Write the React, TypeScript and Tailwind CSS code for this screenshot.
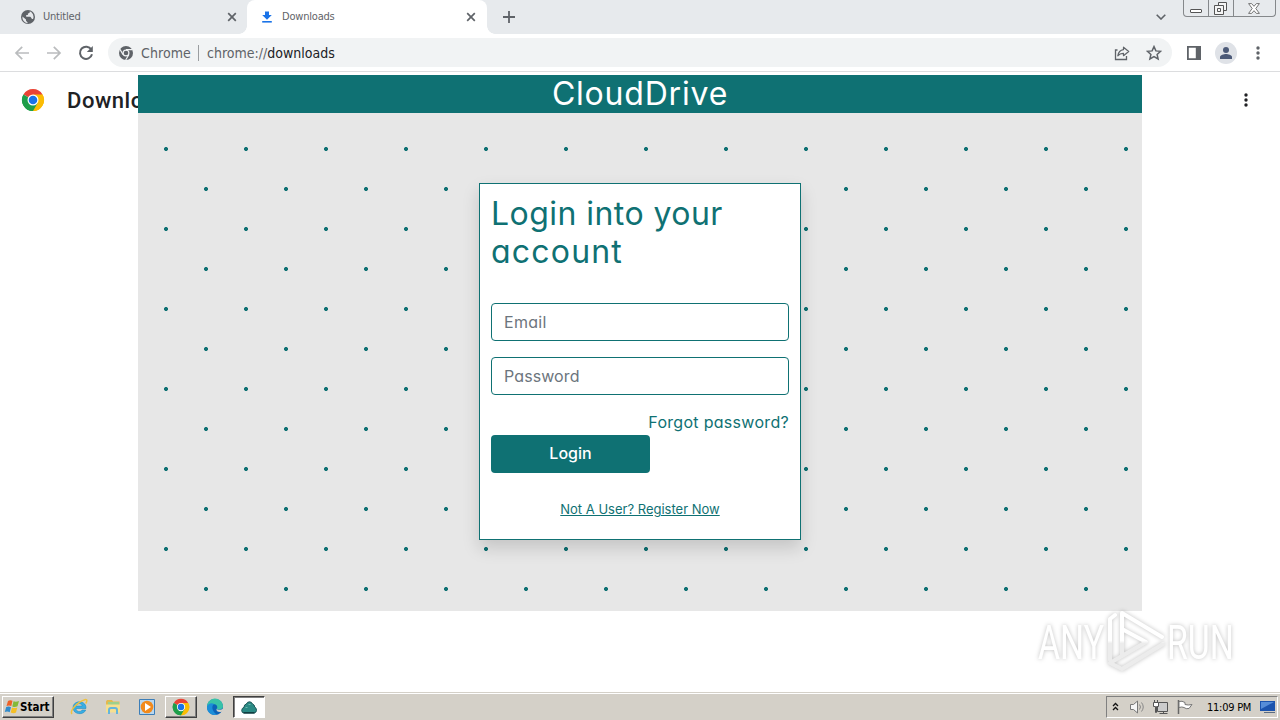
import type { ReactNode } from "react"

type IconProps = {
  className?: string
}

type TabProps = {
  title: string
  titleClassName: string
  icon: ReactNode
  active?: boolean
}

const TEAL_DOTS =
  "radial-gradient(circle at 28px 36px, #0f7173 1.7px, transparent 2.3px), radial-gradient(circle at 68px 76px, #0f7173 1.7px, transparent 2.3px)"

const ChromeLogo = ({ className }: IconProps) => (
  <svg viewBox="0 0 24 24" className={className}>
    <path d="M12 12 2.47 6.5A11 11 0 0 1 21.53 6.5Z" fill="#ea4335" />
    <path d="M12 12 21.53 6.5A11 11 0 0 1 12 23Z" fill="#fbbc04" />
    <path d="M12 12 2.47 6.5A11 11 0 0 0 12 23Z" fill="#1e9e4a" />
    <path d="M12 6.5H21.53A11 11 0 0 1 12 23L16.76 14.75Z" fill="#fbbc04" />
    <path d="M7.24 14.75 2.47 6.5A11 11 0 0 0 12 23L16.76 14.75Z" fill="#1e9e4a" />
    <circle cx="12" cy="12" r="5.5" fill="#fff" />
    <circle cx="12" cy="12" r="4.3" fill="#1a73e8" />
  </svg>
)

const ChromeMono = ({ className }: IconProps) => (
  <svg viewBox="0 0 16 16" className={className}>
    <circle cx="8" cy="8" r="7" fill="#5f6368" />
    <circle cx="8" cy="8" r="2.9" fill="none" stroke="#f1f3f4" strokeWidth="1.2" />
    <path d="M8 4.7h6.5M5.1 9.6 1.9 4.2M10.8 9.7 7.7 15" stroke="#f1f3f4" strokeWidth="1.2" />
  </svg>
)

const Globe = () => (
  <svg viewBox="0 0 16 16" className="h-4 w-4">
    <circle cx="8" cy="8" r="7" fill="#5f6368" />
    <path
      d="M2.4 7.6 6 10.5v1.2l1.6 1.7v.9A6 6 0 0 1 2.4 7.6ZM9.8 2.3c.2 1.4-.5 2-1.9 2.3v1.5H6.2v1.6h4c1.2.4 1 2 2 2.3h.9a6 6 0 0 0-3.3-7.7Z"
      fill="#e8eaed"
    />
  </svg>
)

const DownloadIcon = () => (
  <svg viewBox="0 0 16 16" className="h-4 w-4">
    <path d="M6 2.4h4V6h2.8L8 10.8 3.2 6H6Z" fill="#1a73e8" />
    <path d="M3.2 12h9.6v1.6H3.2Z" fill="#1a73e8" />
  </svg>
)

const Close = ({ className }: IconProps) => (
  <svg viewBox="0 0 10 10" className={className}>
    <path d="m1.2 1.2 7.6 7.6m0-7.6L1.2 8.8" stroke="#5f6368" strokeWidth="1.7" />
  </svg>
)

const Dots = ({ className }: IconProps) => (
  <svg viewBox="0 0 4 16" className={className}>
    <circle cx="2" cy="3" r="1.7" />
    <circle cx="2" cy="8" r="1.7" />
    <circle cx="2" cy="13" r="1.7" />
  </svg>
)

const Tab = ({ title, titleClassName, icon, active }: TabProps) => (
  <div
    className={`relative flex h-[34px] w-[240px] shrink-0 items-center ${
      active ? "rounded-t-lg bg-white pr-[11px] pl-3" : "pr-[10px] pl-[13px]"
    }`}
  >
    {active && (
      <>
        <div className="absolute bottom-0 -left-2 h-2 w-2 bg-[radial-gradient(circle_at_0_0,transparent_7.5px,#fff_8px)]" />
        <div className="absolute -right-2 bottom-0 h-2 w-2 bg-[radial-gradient(circle_at_100%_0,transparent_7.5px,#fff_8px)]" />
      </>
    )}
    {icon}
    <span className={titleClassName}>{title}</span>
    <Close className="ml-auto h-[10px] w-[10px]" />
  </div>
)

const TabStrip = () => (
  <div className="flex h-[34px] bg-[#e7eaed] pl-[7px]">
    <Tab
      title="Untitled"
      titleClassName="mt-px ml-[7px] text-[11px] tracking-[-0.2px] text-[#5f6368]"
      icon={<Globe />}
    />
    <Tab
      title="Downloads"
      titleClassName="mt-px ml-[7px] text-[11px] tracking-[-0.2px] text-[#5f6368]"
      icon={<DownloadIcon />}
      active
    />
    <svg viewBox="0 0 12 12" className="mt-[11px] ml-4 h-3 w-3">
      <path d="M6 0v12M0 6h12" stroke="#5f6368" strokeWidth="1.8" />
    </svg>
    <svg viewBox="0 0 10 6" className="mt-[14px] ml-auto h-[6px] w-[10px]">
      <path d="m.7.7 4.3 4.3L9.3.7" fill="none" stroke="#5f6368" strokeWidth="1.6" />
    </svg>
    <div className="mr-1 ml-[17px] flex h-[17px] w-[93px] rounded-b-[4px] border border-t-0 border-[#85888b]">
      <div className="flex w-[25px] items-end justify-center border-r border-[#85888b] pb-[3px]">
        <div className="h-1 w-3 rounded-[1px] border border-[#555] bg-white" />
      </div>
      <div className="flex w-[25px] items-center justify-center border-r border-[#85888b]">
        <svg viewBox="0 0 13 13" className="mr-[2px] h-[13px] w-[13px]">
          <path d="M4.5 3.5v-3h8v8h-3M.5 3.5h9v9h-9Z" fill="#f5f5f5" stroke="#555" />
          <path d="M3.5 6.5h3v3h-3Z" fill="none" stroke="#555" />
        </svg>
      </div>
      <div className="flex flex-1 items-center justify-center">
        <svg viewBox="0 0 12 11" className="mr-px h-[11px] w-3">
          <path
            d="M.6.6h3L6 3.3 8.4.6h3L7.8 5.5l3.6 4.9h-3L6 7.7 3.6 10.4h-3L4.2 5.5Z"
            fill="#fff"
            stroke="#666"
            strokeWidth=".9"
          />
        </svg>
      </div>
    </div>
  </div>
)

const Toolbar = () => (
  <div className="flex h-[38px] items-center border-b border-[#dcdddf] bg-white">
    <svg viewBox="0 0 16 16" className="ml-[14px] h-4 w-4">
      <path d="M15 8H2m6.2-6.2L2 8l6.2 6.2" fill="none" stroke="#babcbe" strokeWidth="1.7" />
    </svg>
    <svg viewBox="0 0 16 16" className="ml-4 h-4 w-4">
      <path d="M1 8h13M7.8 1.8 14 8l-6.2 6.2" fill="none" stroke="#babcbe" strokeWidth="1.7" />
    </svg>
    <svg viewBox="0 0 16 16" className="ml-4 h-4 w-4">
      <path d="M13.3 4.6A6.1 6.1 0 1 0 14 9.3" fill="none" stroke="#5f6368" strokeWidth="2" />
      <path d="M14.8 1v6h-6Z" fill="#5f6368" />
    </svg>
    <div className="ml-[14px] flex h-[29px] w-[1064px] items-center rounded-full bg-[#f1f3f4] pl-[10px] text-[14px] text-[#5f6368]">
      <ChromeMono className="h-4 w-4" />
      <span className="mt-px ml-[7px] w-[50px] tracking-[0.1px]">Chrome</span>
      <div className="ml-[7px] h-4 w-px bg-[#9a9da0]" />
      <span className="mt-px ml-2">
        chrome://<span className="text-[#202124]">downloads</span>
      </span>
      <svg viewBox="0 0 16 16" className="ml-auto h-4 w-4">
        <path d="M3.5 5H1.500v9.5h11V11" fill="none" stroke="#5f6368" strokeWidth="1.3" />
        <path
          d="M9.5 2.2 14.7 6.5 9.5 10.7V8.3C7 8.2 5.2 9 3.8 10.8 4.3 7.5 6.3 5 9.5 4.6Z"
          fill="none"
          stroke="#5f6368"
          strokeWidth="1.2"
          strokeLinejoin="round"
        />
      </svg>
      <svg viewBox="0 0 16 16" className="mr-[10px] ml-4 h-4 w-4">
        <path
          d="m8 1.6 1.9 4.3 4.7.4-3.5 3.1 1 4.5L8 11.5l-4.1 2.4 1-4.5L1.4 6.3l4.7-.4Z"
          fill="none"
          stroke="#5f6368"
          strokeWidth="1.5"
        />
      </svg>
    </div>
    <svg viewBox="0 0 14 14" className="ml-[15px] h-[14px] w-[14px]">
      <path d="M0 0h14v14H0Zm1.800 1.800v10.400h7V1.800Z" fill="#5f6368" fillRule="evenodd" />
    </svg>
    <div className="ml-[14px] flex h-[22px] w-[22px] items-center justify-center rounded-full bg-[#dfe2e7]">
      <svg viewBox="0 0 12 12" className="h-3 w-3">
        <circle cx="6" cy="3" r="3" fill="#4c5a78" />
        <path d="M0 12V10c0-2 4-3 6-3s6 1 6 3v2Z" fill="#4c5a78" />
      </svg>
    </div>
    <Dots className="ml-[19px] h-4 w-1 fill-[#5f6368]" />
  </div>
)

const inputClass =
  "h-[38px] w-full rounded-[4px] border border-[#0f7173] bg-white px-3 text-[16px] placeholder:text-[#6c757d] placeholder:opacity-100"

const LoginCard = () => (
  <form className="mx-auto mt-[70px] h-[357px] w-[322px] border border-[#0f7173] bg-white px-[11px] pt-[11px] text-[#0f7173] shadow-[0_8px_16px_rgba(0,0,0,0.15)]">
    <h2 className="text-[32px] leading-[38px] font-normal">
      <span className="block tracking-[0.45px] whitespace-nowrap">Login into your</span>
      <span className="block tracking-[1.2px]">account</span>
    </h2>
    <input className={`${inputClass} mt-[32px] tracking-[0.3px]`} placeholder="Email" />
    <input className={`${inputClass} mt-4 tracking-[0.1px]`} placeholder="Password" />
    <div className="mt-[15px] h-[25px] text-right text-[16px] leading-6 tracking-[0.3px] whitespace-nowrap">
      Forgot password?
    </div>
    <button
      type="button"
      className="block h-[38px] w-[159px] rounded-[4px] bg-[#0f7173] pb-[2px] text-[16px] font-medium text-white"
    >
      Login
    </button>
    <div className="mt-[26px] text-center text-[13px] leading-5 whitespace-nowrap underline">
      Not A User? Register Now
    </div>
  </form>
)

const CloudDriveWindow = () => (
  <div className="absolute top-[75px] left-[138px] h-[536px] w-[1004px] bg-[#e7e7e7] font-[Inter,sans-serif] [font-feature-settings:'cv11','ss03']">
    <h1 className="h-[38px] bg-[#0f7173] text-center text-[32px] leading-[38px] font-normal tracking-[0.8px] text-white">
      CloudDrive
    </h1>
    <div className="flex h-[498px] bg-size-[80px_80px]" style={{ backgroundImage: TEAL_DOTS }}>
      <LoginCard />
    </div>
  </div>
)

const Watermark = () => (
  <div className="absolute top-[607px] left-[1031px] h-[70px] w-[210px] [filter:drop-shadow(0_0_2px_rgba(0,0,0,0.25))]">
    <svg viewBox="0 0 210 70" className="h-[70px] w-[210px] overflow-visible">
      <defs>
        <linearGradient id="fade" x1="0" y1="0" x2="0" y2="70" gradientUnits="userSpaceOnUse">
          <stop offset=".48" stopColor="#fff" />
          <stop offset=".52" stopColor="#ececec" />
        </linearGradient>
      </defs>
      <g fill="url(#fade)" fontFamily="Roboto, sans-serif" fontSize="49" fontWeight="400">
        <text transform="translate(7 52) scale(.69 1)">ANY</text>
        <text transform="translate(136 52) scale(.69 1)">RUN</text>
      </g>
      <g fill="none" stroke="url(#fade)" strokeWidth="4" strokeLinejoin="round" strokeLinecap="round">
        <path d="M91 48V6l40 24M79 53V12l5-4M91 22l24 13-36 21 12 6 41-25" />
      </g>
    </svg>
  </div>
)

const ExplorerE = () => (
  <svg viewBox="0 0 18 18" className="h-[18px] w-[18px]">
    <path
      d="M16 10.5H6c.3 3.8 5 3.8 6 1.500h3.700c-1.700 5.500-12.700 5-12.700-2.500S16.500 1.500 16 10.500ZM6.200 8h6c-.3-3-5.600-3-6 0Z"
      fill="#38aee4"
      stroke="#1683bd"
      strokeWidth=".5"
    />
    <path d="M2 16C-.5 13 7 4 15.500 1.500c2 0 1.500 2 .2 4" fill="none" stroke="#efc13e" strokeWidth="1.5" />
  </svg>
)

const FolderIcon = () => (
  <svg viewBox="0 0 18 18" className="h-[18px] w-[18px]">
    <path d="M2 3.500 3 2h5l1 1.500h6.500V13H2Z" fill="#e3b94f" />
    <path d="M4 4h11v5H4Z" fill="#9fd08b" />
    <path d="M2 6.500h14v8H2Z" fill="#f6df8f" />
    <path d="M5 16v-4q0-2 2-2h4q2 0 2 2v4" fill="none" stroke="#64b5dc" strokeWidth="2" />
  </svg>
)

const MediaIcon = () => (
  <svg viewBox="0 0 18 18" className="h-[18px] w-[18px]">
    <path d="M1.500 1.500h15v15h-15Z" fill="#b9d7ef" stroke="#3c7eb8" />
    <circle cx="9" cy="9" r="6.3" fill="#f28a1c" />
    <path d="m7 5 6 4-6 4Z" fill="#fff" />
  </svg>
)

const EdgeIcon = () => (
  <svg viewBox="0 0 18 18" className="h-[18px] w-[18px]">
    <circle cx="9" cy="9" r="8" fill="#0c62b8" />
    <path d="M1 9a8 8 0 0 1 16-1c.3 3-3 4.500-6.500 3 2-2 0-5-3-5C4 6 2 7.500 1 9Z" fill="#38c2a8" />
    <path d="M1 9C2 5 6 4.500 8.500 6.300 5.500 6.500 5 13 11 16.700 5 18 .7 14 1 9Z" fill="#1c8ed8" />
    <path d="M10.500 11c2.500 1.500 5 .8 6.300-.3L18 13l-2.500.8c-3 .8-5.500-.6-5-2.800Z" fill="#d4d0c8" />
  </svg>
)

const CloudIcon = () => (
  <svg viewBox="0 0 16 13" className="mt-px h-[13px] w-4">
    <path
      d="M3 12Q.8 12 .7 9.500.8 7 3 6.300 3 3.500 5.300 3 6.300.8 8.500.8q2.200 0 3 2.200 2 .5 2.200 3 2 1 1.800 3.500-.2 2-2.200 2.500Z"
      fill="#2b8a84"
      stroke="#1c5556"
    />
    <path d="M4.500 6.500h2m1-3h2" stroke="#6ab9ae" />
    <path d="M2.500 11.800h11" stroke="#123c40" strokeWidth="1.500" />
  </svg>
)

const StartButton = () => (
  <div className="flex h-[22px] w-[52px] items-center border border-t-white border-r-[#404040] border-b-[#404040] border-l-white bg-[#d4d0c8] pl-px shadow-[inset_-1px_-1px_#808080]">
    <svg viewBox="0 0 16 16" className="h-4 w-4 shrink-0">
      <path d="M4 2q2-1.500 4.500-.2L7.300 7Q5 6 2.500 7Z" fill="#ee6126" />
      <path d="M9.500 2.300q2.500 1 5.500-.3l-1.500 5.200q-2.500 1.300-5.200.2Z" fill="#83b93a" />
      <path d="M2.200 8q2.600-1 4.800.2l-1.300 5Q3.500 12 .8 13Z" fill="#318bcb" />
      <path d="M8 8.500q2.500 1.200 5.300 0L12 13.600q-2.500 1.200-5.300-.2Z" fill="#f5bf26" />
    </svg>
    <span className="mt-[2px] text-[11.500px] font-bold text-black">Start</span>
  </div>
)

const Tray = () => (
  <div className="mr-[2px] ml-auto flex h-[22px] w-[172px] items-center border border-t-[#808080] border-r-white border-b-white border-l-[#808080] pl-[5px]">
    <svg viewBox="0 0 7 9" className="mb-[2px] h-[9px] w-[7px]">
      <path d="m1 4 2.500-2.500L6 4M1 8l2.500-2.500L6 8" fill="none" stroke="#111" strokeWidth="1.300" />
    </svg>
    <svg viewBox="0 0 18 16" className="ml-[10px] h-4 w-[18px]">
      <path d="M1.500 5.500h3L8.500 2v12l-4-3.500h-3Z" fill="#f5f5f5" stroke="#777" />
      <path d="M10.500 5.500q2 2.500 0 5M12.500 3.500q3.500 4.500 0 9" fill="none" stroke="#888" />
    </svg>
    <svg viewBox="0 0 18 16" className="ml-[5px] h-4 w-[18px]">
      <path d="M5.500 3.500h10v9h-10Z" fill="#ccc" stroke="#555" />
      <path d="M7.500 14.500h8M11.500 12.500v2M1.500 3.500h5v4h-2v6h-1v-6h-2Z" fill="#fff" stroke="#555" />
      <path d="M2.500 1v2M5.500 1v2" stroke="#555" />
    </svg>
    <svg viewBox="0 0 18 16" className="ml-[6px] h-4 w-[18px]">
      <path d="M2.500 1v14" stroke="#666" strokeWidth="1.500" />
      <path d="M3 2.500q3-1 6 1v2q3 1 7 0l-3 4q-3 .8-5-1-2-1-5 0Z" fill="#fff" stroke="#777" />
    </svg>
    <span className="mt-[2px] ml-[13px] w-[46px] text-[11px] tracking-[-0.25px] whitespace-nowrap text-black">
      11:09 PM
    </span>
    <svg viewBox="0 0 16 14" className="ml-[7px] h-[14px] w-4 shrink-0">
      <path d="M0 1h15v10H0Z" fill="#1c54ae" />
      <path d="M1 2h13L1 9Z" fill="#568dd8" />
      <path d="M4 13h11v-1H4Z" fill="#5a6c83" />
    </svg>
  </div>
)

const Taskbar = () => (
  <div className="absolute inset-x-0 bottom-0 flex h-[28px] items-center border-t border-[#d4d0c8] bg-[#d4d0c8] pt-px pl-[2px] shadow-[inset_0_1px_#fff]">
    <StartButton />
    <div className="ml-[16px] flex items-center gap-[16px]">
      <ExplorerE />
      <FolderIcon />
      <MediaIcon />
    </div>
    <div className="ml-[9px] flex h-[22px] w-8 items-center justify-center border border-t-white border-r-[#404040] border-b-[#404040] border-l-white shadow-[inset_-1px_-1px_#808080]">
      <ChromeLogo className="h-[18px] w-[18px]" />
    </div>
    <div className="ml-[9px]">
      <EdgeIcon />
    </div>
    <div className="ml-[9px] flex h-[22px] w-8 items-center justify-center border border-t-[#404040] border-r-white border-b-white border-l-[#404040] bg-white shadow-[inset_1px_1px_#808080]">
      <CloudIcon />
    </div>
    <Tray />
  </div>
)

export default function App() {
  return (
    <div className="relative h-[720px] w-[1280px] overflow-hidden bg-white font-['DejaVu_Sans_Condensed','DejaVu_Sans',sans-serif]">
      <TabStrip />
      <Toolbar />
      <div className="flex h-14 items-center pr-8 pl-[21px]">
        <ChromeLogo className="h-6 w-6" />
        <h1 className="ml-[22px] font-[Roboto,sans-serif] text-[22px] font-medium tracking-[0.55px] text-[#202124]">
          Downloads
        </h1>
        <Dots className="ml-auto h-4 w-1 fill-[#202124]" />
      </div>
      <CloudDriveWindow />
      <Watermark />
      <Taskbar />
    </div>
  )
}
